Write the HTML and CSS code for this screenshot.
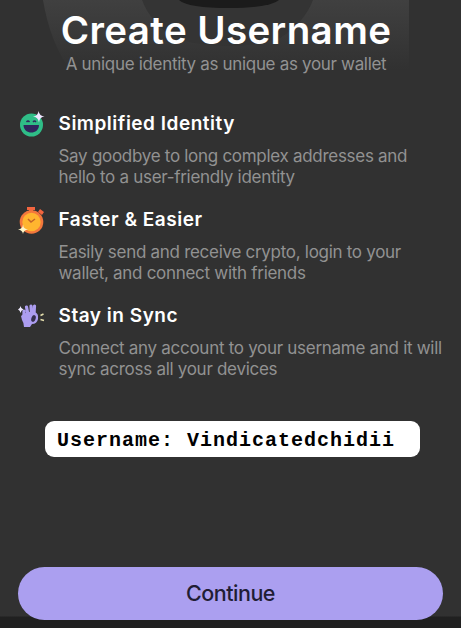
FILE: index.html
```html
<!DOCTYPE html>
<html lang="en">
<head>
  <meta charset="UTF-8">
  <title>Create Username</title>
  <link rel="stylesheet" href="styles.css">
</head>
<body>
  <main class="screen">
    <svg class="backdrop" width="461" height="90" viewBox="0 0 461 90" aria-hidden="true">
      <defs>
        <linearGradient id="fade" x1="0" y1="0" x2="0" y2="1">
          <stop offset="0" stop-color="#404040"/>
          <stop offset="1" stop-color="#313131"/>
        </linearGradient>
      </defs>
      <path d="M43 0H409V70H70Q50 42 43 0z" fill="url(#fade)"/>
      <path d="M142 0H313Q304 23 280 38Q229 54 174 38Q151 23 142 0z" fill="#343434"/>
      <path d="M179 0H279Q270 8 229 8Q188 8 179 0z" fill="#1b1b1b"/>
    </svg>

    <header class="header">
      <h1>Create Username</h1>
      <p class="subtitle">A unique identity as unique as your wallet</p>
    </header>

    <section class="features">
      <div class="feature">
        <svg class="icon" width="26" height="26" viewBox="0 0 26 26">
          <circle cx="12.5" cy="14" r="11.5" fill="#2fbd87"/>
          <path d="M4.5 14H20C20 24 4.5 24 4.5 14z" fill="#30265c"/>
          <path d="M7.5 11q1.5-2 3 0M14 11q1.5-2 3 0" fill="none" stroke="#30265c" stroke-width="1.3"/>
          <path d="M19.5 0Q20.5 5 25.5 5.5Q20.5 6 20 11.5Q19 6 14 5.5Q19 5 19.5 0z" fill="#eee6ff"/>
        </svg>
        <div class="text">
          <h2>Simplified Identity</h2>
          <p>Say goodbye to long complex addresses and<br>hello to a user-friendly identity</p>
        </div>
      </div>

      <div class="feature">
        <svg class="icon" width="26" height="26" viewBox="0 0 26 26">
          <path d="M8 0h8v3h-2v4h-4V3H8zM21 2l4 3-2 3-4-3z" fill="#f2653f"/>
          <circle cx="12.5" cy="15" r="11.8" fill="#f3773c"/>
          <circle cx="12.5" cy="15" r="9.2" fill="#ffb52f"/>
          <path d="M9 12l3 3 4-3" fill="none" stroke="#c46428" stroke-width="1.5"/>
          <path d="M4 17.5Q4.500 22 9 22.5Q4.500 23 4 27Q3.500 23-1 22.5Q3.500 22 4 17.5z" fill="#fff6c6"/>
        </svg>
        <div class="text">
          <h2>Faster &amp; Easier</h2>
          <p>Easily send and receive crypto, login to your<br>wallet, and connect with friends</p>
        </div>
      </div>

      <div class="feature">
        <svg class="icon" width="26" height="26" viewBox="0 0 26 26">
          <path d="M5 14L5 9M9 13L7.5 5M12.5 13L12 4M15 12L15.5 4" fill="none" stroke="#ac9df0" stroke-width="3.2" stroke-linecap="round"/>
          <path d="M2 14Q8 9 15 10Q20 11 19 17Q18 22 13 22L11 25H5Q5 21 3 18z" fill="#ac9df0"/>
          <ellipse cx="14.5" cy="16.5" rx="2.1" ry="3.5" transform="rotate(18 14.5 16.5)" fill="#36304f"/>
          <path d="M1.5 4Q2 7 4.500 7.5Q2 8 1.500 11Q1 8-1 7.5Q1 7 1.500 4z" fill="#eeeaff"/>
          <path d="M21.5 13.5L24.5 12M21.5 17.5L25 18.5" stroke="#e5dfad" stroke-width="1.5"/>
        </svg>
        <div class="text">
          <h2>Stay in Sync</h2>
          <p>Connect any account to your username and it will<br>sync across all your devices</p>
        </div>
      </div>
    </section>

    <div class="username">Username: Vindicatedchidii</div>

    <footer class="footer">
      <button class="continue">Continue</button>
    </footer>
  </main>
</body>
</html>
```

FILE: styles.css
```css
body {
  margin: 0;
  background: #313131;
  font-family: Inter, "Liberation Sans", sans-serif;
}
.screen {
  position: relative;
  height: 628px;
  overflow: hidden;
  display: flex;
  flex-direction: column;
}
.backdrop {
  position: absolute;
  top: 0;
  left: 0;
}
.header {
  position: relative;
  height: 108px;
  box-sizing: border-box;
  padding-top: 6px;
  text-align: center;
  white-space: nowrap;
}
h1 {
  margin: 0 0 0 -9px;
  font-size: 38.5px;
  line-height: 48px;
  font-weight: 600;
  letter-spacing: 0.4px;
  color: #fff;
}
.subtitle {
  margin: 0 0 0 -9px;
  font-size: 17px;
  line-height: 21px;
  letter-spacing: -0.32px;
  color: #929292;
}
.features {
  height: 313px;
}
.feature {
  display: flex;
  height: 95.7px;
  padding-left: 19px;
}
.icon {
  flex: none;
  margin-top: 3px;
  overflow: visible;
}
.text {
  margin-left: 13.5px;
  white-space: nowrap;
}
h2 {
  margin: 0;
  padding-top: 3.2px;
  font-size: 19px;
  line-height: 26px;
  font-weight: 600;
  letter-spacing: 0.52px;
  color: #fff;
}
.text p {
  margin: 9px 0 0;
  font-size: 17px;
  line-height: 21.3px;
  letter-spacing: -0.29px;
  color: #929292;
}
.username {
  width: 375px;
  height: 36px;
  box-sizing: border-box;
  margin-left: 45px;
  padding-left: 12px;
  border-radius: 9px;
  background: #fff;
  color: #000;
  font: bold 20px/39px "Liberation Mono", monospace;
  letter-spacing: 1px;
  white-space: nowrap;
}
.footer {
  margin-top: auto;
  padding: 0 18px 8px;
  background: linear-gradient(#313131 49px, #202020 50px);
}
.continue {
  display: block;
  width: 100%;
  height: 53px;
  border: none;
  border-radius: 27px;
  background: #ab9ff0;
  color: #211d35;
  font: 500 21.5px/50px Inter, "Liberation Sans", sans-serif;
  letter-spacing: -0.5px;
  padding: 0 0 2px;
}
```
